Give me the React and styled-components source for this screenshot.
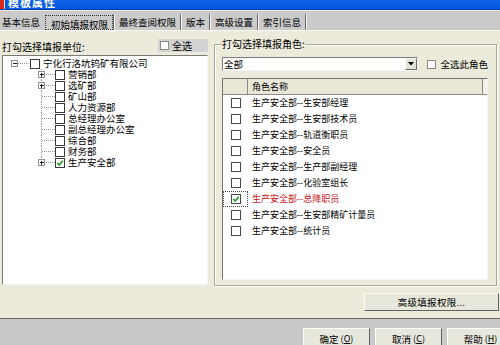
import React from 'react';
import styled, { createGlobalStyle } from 'styled-components';

const GlobalStyle = createGlobalStyle`
  html, body {
    margin: 0;
    padding: 0;
    background: #cacaca;
    overflow: hidden;
  }
  body {
    font-family: "Noto Sans CJK SC", "DejaVu Sans", sans-serif;
    color: #000;
  }
`;

const Window = styled.div`
  width: 500px;
  height: 345px;
  display: flex;
  flex-direction: column;
  overflow: hidden;
  background: #ebeadb;
`;

const TitleBar = styled.div`
  height: 10px;
  flex: none;
  box-sizing: border-box;
  background: linear-gradient(#0b62ea, #0757dc);
  border-bottom: 1px solid #0040b4;
  display: flex;
  align-items: flex-end;
  gap: 3px;
  overflow: hidden;
`;

const TitleText = styled.span`
  color: #fff;
  font-weight: bold;
  font-size: 11px;
  line-height: 14px;
  letter-spacing: 1px;
`;

const TabStrip = styled.div`
  height: 20px;
  flex: none;
  box-sizing: border-box;
  background: #cbcbcb;
  border-top: 1px solid #ececec;
  padding-top: 3px;
  display: flex;
  align-items: stretch;
`;

const Tab = styled.div`
  font-size: 9.5px;
  line-height: 16px;
  white-space: nowrap;
  padding: ${p => (p.$first ? '0 5px 0 2px' : p.$active ? '0 4px 0 5px' : '0 4px')};
  border: ${p => (p.$active ? '1px dotted #3a3a3a' : 'none')};
  margin-top: ${p => (p.$active ? '1px' : '0')};
`;

const TabSep = styled.div`
  width: 1px;
  border-right: 1px solid #f6f6f6;
  background: #6a6a6a;
`;

const Panel = styled.div`
  flex: 1;
  box-sizing: border-box;
  border-top: 1px solid #f8f8f0;
  padding: 7px 1px 0 2px;
  display: flex;
  flex-direction: column;
`;

const Columns = styled.div`
  display: grid;
  grid-template-columns: 206px 283px;
  column-gap: 6px;
`;

const LeftColumn = styled.div`
  display: flex;
  flex-direction: column;
`;

const LabelRow = styled.div`
  height: 17px;
  display: flex;
  align-items: center;
  justify-content: space-between;
`;

const Label = styled.span`
  font-size: 10px;
  line-height: 12px;
  white-space: nowrap;
`;

const SelectAll = styled.label`
  width: 48px;
  height: 13px;
  margin-top: -2px;
  background: #d2d2d2;
  display: flex;
  align-items: center;
  gap: 3px;
  padding-left: 2px;
  font-size: 10px;
  line-height: 12px;
`;

const TreeBox = styled.div`
  height: 230px;
  box-sizing: border-box;
  background: #fff;
  border: 1px solid;
  border-color: #7a7a7a #f4f4f4 #f4f4f4 #7a7a7a;
  padding-top: 2px;
`;

const TreeRow = styled.div`
  height: 11px;
  display: flex;
  align-items: center;
  padding-left: ${p => p.$indent}px;
  font-size: 9.5px;
  line-height: 11px;
  white-space: nowrap;
`;

const TreeLabel = styled.span`
  margin-left: 3px;
`;

const Box = styled.span`
  flex: none;
  width: ${p => p.$size}px;
  height: ${p => p.$size}px;
  box-sizing: border-box;
  border: 1px solid ${p => p.$border || '#3a3a3a'};
  background: #fff;
  display: inline-flex;
  align-items: center;
  justify-content: center;
`;

const GroupBox = styled.fieldset`
  margin: 1px 0 0;
  min-width: 0;
  height: 247px;
  box-sizing: border-box;
  padding: 8px 8px 5px 7px;
  border: 1px solid #a8a798;
  box-shadow: inset 1px 1px 0 #fff, 1px 1px 0 #fff;
`;

const Legend = styled.legend`
  padding: 0;
  font-size: 10px;
  line-height: 10px;
  background: #ebeadb;
`;

const ComboRow = styled.div`
  display: flex;
  align-items: center;
  height: 14px;
`;

const Combo = styled.div`
  width: 198px;
  height: 14px;
  box-sizing: border-box;
  background: #fff;
  border: 1px solid;
  border-color: #7c7c7c #f4f4f4 #f4f4f4 #7c7c7c;
  display: flex;
  align-items: center;
  justify-content: space-between;
  font-size: 9.5px;
  line-height: 12px;
  padding-left: 1px;
`;

const ComboButton = styled.span`
  width: 12px;
  height: 12px;
  box-sizing: border-box;
  background: #e4e3d6;
  border: 1px solid;
  border-color: #fff #6b6b6b #6b6b6b #fff;
  display: flex;
  align-items: center;
  justify-content: center;
`;

const RoleAll = styled.label`
  margin-left: 9px;
  display: flex;
  align-items: center;
  gap: 4px;
  font-size: 9.5px;
  line-height: 12px;
  white-space: nowrap;
`;

const List = styled.div`
  margin-top: 7px;
  width: 266px;
  height: 202px;
  box-sizing: border-box;
  background: #fff;
  border: 1px solid;
  border-color: #727272 #f4f4f4 #f4f4f4 #727272;
`;

const ListHeader = styled.div`
  height: 16px;
  box-sizing: border-box;
  display: flex;
  background: #e9e8d8;
  border-bottom: 1px solid #8c8b7e;
`;

const HeaderCell = styled.div`
  width: ${p => p.$w}px;
  box-sizing: border-box;
  border-right: 1px solid #8c8b7e;
  padding-left: 4px;
  font-size: 9px;
  line-height: 15px;
`;

const HeaderFiller = styled.div`
  flex: 1;
  background: #f2f2ea;
`;

const ListRow = styled.div`
  height: 16px;
  display: flex;
  align-items: center;
`;

const CheckCell = styled.div`
  width: 25px;
  height: 16px;
  box-sizing: border-box;
  display: flex;
  align-items: center;
  justify-content: center;
  border: 1px dotted ${p => (p.$focus ? '#4a4a4a' : 'transparent')};
`;

const RoleText = styled.span`
  padding-left: 4px;
  font-size: 9px;
  line-height: 12px;
  white-space: nowrap;
  color: ${p => (p.$hot ? '#c8151b' : '#000')};
`;

const AdvancedRow = styled.div`
  margin-top: 7px;
  display: flex;
  justify-content: flex-end;
`;

const RaisedButton = styled.div`
  width: ${p => p.$w}px;
  height: ${p => p.$h}px;
  flex: none;
  box-sizing: border-box;
  background: #e8e7dc;
  border: 1px solid;
  border-color: #fdfdf8 #606060 #606060 #fdfdf8;
  display: flex;
  align-items: center;
  justify-content: center;
  font-size: 9.5px;
  line-height: 12px;
  white-space: nowrap;
  letter-spacing: ${p => (p.$spaced ? '0.3px' : '0')};
`;

const Footer = styled.div`
  height: 27px;
  flex: none;
  box-sizing: border-box;
  background: #c9c9c9;
  border-top: 1px solid #646464;
  padding-top: 9px;
  display: flex;
  justify-content: flex-end;
  gap: 5px;
  margin-right: -14px;
`;

const Hotkey = styled.span`
  font-size: 9px;
  margin-left: 2px;
`;

const CheckMark = () => (
  <svg width="8" height="8" viewBox="0 0 8 8">
    <polyline points="1.3,4 3.2,6 6.8,1.8" fill="none" stroke="#1f9d28" strokeWidth="1.7" />
  </svg>
);

const CheckBox = ({ checked, size = 10, border }) => (
  <Box $size={size} $border={border}>{checked && <CheckMark />}</Box>
);

const Dotted = { stroke: '#9c9c9c', strokeWidth: 1, strokeDasharray: '1 1', shapeRendering: 'crispEdges' };

const Expander = ({ cx, open }) => (
  <g shapeRendering="crispEdges">
    <rect x={cx - 3} y="2.5" width="6" height="6" fill="#fff" stroke="#8c8c8c" />
    <line x1={cx - 2} y1="5.5" x2={cx + 2} y2="5.5" stroke="#222" />
    {!open && <line x1={cx} y1="3.5" x2={cx} y2="7.5" stroke="#222" />}
  </g>
);

const RootGuide = () => (
  <svg width="27" height="11">
    <line x1="15" y1="5.5" x2="27" y2="5.5" {...Dotted} />
    <Expander cx={11.5} open />
  </svg>
);

const ChildGuide = ({ expander, last }) => (
  <svg width="17" height="11">
    <line x1="3.5" y1="0" x2="3.5" y2={last ? 5.5 : 11} {...Dotted} />
    <line x1="4" y1="5.5" x2="17" y2="5.5" {...Dotted} />
    {expander && <Expander cx={3.5} />}
  </svg>
);

const AppIcon = () => (
  <svg width="5" height="9">
    <rect x="0" y="0" width="4" height="9" fill="#d52a1c" />
    <rect x="4" y="0" width="1" height="9" fill="#f2d2c8" />
  </svg>
);

const DropArrow = () => (
  <svg width="6" height="4">
    <polygon points="0,0 6,0 3,3.5" fill="#000" />
  </svg>
);

const tabs = ['基本信息', '初始填报权限', '最终查阅权限', '版本', '高级设置', '索引信息'];

const units = [
  { name: '营销部', expander: true },
  { name: '选矿部', expander: true },
  { name: '矿山部' },
  { name: '人力资源部' },
  { name: '总经理办公室' },
  { name: '副总经理办公室' },
  { name: '综合部' },
  { name: '财务部' },
  { name: '生产安全部', expander: true, checked: true },
];

const roles = [
  '生产安全部--生安部经理',
  '生产安全部--生安部技术员',
  '生产安全部--轨道衡职员',
  '生产安全部--安全员',
  '生产安全部--生产部副经理',
  '生产安全部--化验室组长',
  '生产安全部--总降职员',
  '生产安全部--生安部精矿计量员',
  '生产安全部--统计员',
];

const activeRole = 6;

export default function App() {
  return (
    <Window>
      <GlobalStyle />
      <TitleBar>
        <AppIcon />
        <TitleText>模板属性</TitleText>
      </TitleBar>

      <TabStrip>
        {tabs.map((t, i) => (
          <React.Fragment key={t}>
            <Tab $first={i === 0} $active={i === 1}>{t}</Tab>
            {i > 0 && <TabSep />}
          </React.Fragment>
        ))}
      </TabStrip>

      <Panel>
        <Columns>
          <LeftColumn>
            <LabelRow>
              <Label>打勾选择填报单位:</Label>
              <SelectAll>
                <CheckBox size={9} border="#8a8a8a" />
                全选
              </SelectAll>
            </LabelRow>
            <TreeBox>
              <TreeRow $indent={0}>
                <RootGuide />
                <CheckBox />
                <TreeLabel>宁化行洛坑钨矿有限公司</TreeLabel>
              </TreeRow>
              {units.map((u, i) => (
                <TreeRow key={u.name} $indent={35}>
                  <ChildGuide expander={u.expander} last={i === units.length - 1} />
                  <CheckBox checked={u.checked} />
                  <TreeLabel>{u.name}</TreeLabel>
                </TreeRow>
              ))}
            </TreeBox>
          </LeftColumn>

          <GroupBox>
            <Legend>打勾选择填报角色:</Legend>
            <ComboRow>
              <Combo>
                全部
                <ComboButton><DropArrow /></ComboButton>
              </Combo>
              <RoleAll>
                <CheckBox size={9} border="#8a8a8a" />
                全选此角色
              </RoleAll>
            </ComboRow>
            <List>
              <ListHeader>
                <HeaderCell $w={25} />
                <HeaderCell $w={235}>角色名称</HeaderCell>
                <HeaderFiller />
              </ListHeader>
              {roles.map((r, i) => (
                <ListRow key={r}>
                  <CheckCell $focus={i === activeRole}>
                    <CheckBox checked={i === activeRole} border="#4a4a4a" />
                  </CheckCell>
                  <RoleText $hot={i === activeRole}>{r}</RoleText>
                </ListRow>
              ))}
            </List>
          </GroupBox>
        </Columns>

        <AdvancedRow>
          <RaisedButton $w={135} $h={18} $spaced>高级填报权限...</RaisedButton>
        </AdvancedRow>
      </Panel>

      <Footer>
        <RaisedButton $w={67} $h={21}>确定<Hotkey>(<u>O</u>)</Hotkey></RaisedButton>
        <RaisedButton $w={67} $h={21}>取消<Hotkey>(<u>C</u>)</Hotkey></RaisedButton>
        <RaisedButton $w={67} $h={21}>帮助<Hotkey>(<u>H</u>)</Hotkey></RaisedButton>
      </Footer>
    </Window>
  );
}
